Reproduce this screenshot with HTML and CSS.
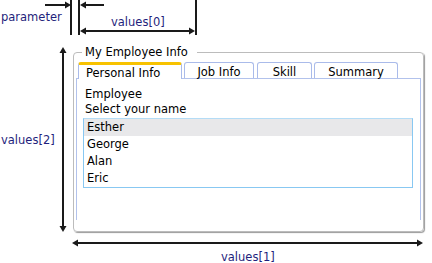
FILE: index.html
```html
<!DOCTYPE html>
<html lang="en">

<head>
    <meta charset="UTF-8">
    <title>Employee Info layout</title>
    <link rel="stylesheet" href="styles.css">
</head>

<body>
    <div class="diagram">
        <fieldset class="group">
            <legend>My Employee Info</legend>
            <div class="tabs">
                <span class="tab tab-personal active">Personal Info</span>
                <span class="tab tab-job">Job Info</span>
                <span class="tab tab-skill">Skill</span>
                <span class="tab tab-summary">Summary</span>
            </div>
            <div class="panel">
                <div class="label">Employee</div>
                <div class="label">Select your name</div>
                <ul class="list">
                    <li class="selected">Esther</li>
                    <li>George</li>
                    <li>Alan</li>
                    <li>Eric</li>
                </ul>
            </div>
        </fieldset>

        <!-- measurement marks drawn over the form -->
        <svg class="marks" width="432" height="263" viewBox="0 0 432 263">
            <g class="ink">
                <line x1="45" y1="5" x2="66" y2="5" />
                <line x1="71" y1="0" x2="71" y2="35" />
                <line x1="79" y1="0" x2="79" y2="35" />
                <line x1="86" y1="5" x2="104" y2="5" />
                <line x1="196" y1="0" x2="196" y2="35" />
                <line x1="85" y1="31" x2="190" y2="31" />
                <line x1="63" y1="52" x2="63" y2="227" />
                <line x1="77" y1="243" x2="418" y2="243" />
            </g>
            <g class="heads">
                <path d="M65 1.5 L71 5 L65 8.5 Z" />
                <path d="M86 1.5 L80 5 L86 8.5 Z" />
                <path d="M86 27.5 L80 31 L86 34.5 Z" />
                <path d="M189 27.5 L195 31 L189 34.5 Z" />
                <path d="M59.5 53 L63 47 L66.5 53 Z" />
                <path d="M59.5 226 L63 232 L66.5 226 Z" />
                <path d="M78 239.5 L72 243 L78 246.5 Z" />
                <path d="M417 239.5 L423 243 L417 246.5 Z" />
            </g>
            <text x="1" y="17">parameter</text>
            <text x="111" y="22">values[0]</text>
            <text x="1" y="140">values[2]</text>
            <text x="221" y="257">values[1]</text>
        </svg>
    </div>
</body>

</html>
```

FILE: styles.css
```css
body {
    margin: 0;
    background-color: #fff;
    font-family: 'DejaVu Sans', Verdana, sans-serif;
    font-size: 11.5px;
    color: #000;
}

.diagram {
    position: relative;
    width: 432px;
    height: 263px;
    padding: 45px 0 0 73px;
    box-sizing: border-box;
}

.group {
    width: 351px;
    box-sizing: border-box;
    margin: 0;
    padding: 0;
    border: 1px solid #bcbcbc;
    border-radius: 4px;
    box-shadow: 1px 1px 1px #9a9a9a;
}

.group legend {
    margin-left: 8px;
    padding: 0 9px 0 3px;
    line-height: 14px;
}

.tabs {
    display: flex;
    gap: 2px;
    margin: 3px 2px 0;
    padding-left: 2px;
}

.tab {
    height: 16px;
    line-height: 18px;
    box-sizing: border-box;
    border: 1px solid #aabbea;
    border-bottom: 0;
    border-radius: 3px 3px 0 0;
    background: #fff;
    text-align: center;
    margin-bottom: -1px;
    position: relative;
}

.tab.active {
    height: 17px;
    border-top: 3px solid #f7c200;
    line-height: 16px;
    text-align: left;
    padding-left: 7px;
}

.tab-personal { width: 104px; }
.tab-job { width: 70px; }
.tab-skill { width: 55px; margin-left: 1px; }
.tab-summary { width: 84px; }

.panel {
    margin: 0 2px 11px;
    height: 142px;
    box-sizing: border-box;
    border: 1px solid #b2c2ec;
    border-bottom: 0;
    padding: 8px 6px 0;
}

.label {
    padding-left: 2px;
    line-height: 15px;
}

.list {
    list-style: none;
    margin: 1px 0 0;
    padding: 0;
    width: 330px;
    box-sizing: border-box;
    border: 1px solid #88c8f2;
    border-top-color: #b4dcf6;
}

.list li {
    line-height: 17px;
    padding-left: 3px;
}

.list li.selected {
    background: #e8e8ea;
}

.marks {
    position: absolute;
    left: 0;
    top: 0;
}

.marks .ink line {
    stroke: #1a1a1a;
    stroke-width: 2;
}

.marks .heads path {
    fill: #1a1a1a;
}

.marks text {
    font-family: 'DejaVu Sans', Verdana, sans-serif;
    font-size: 11.5px;
    fill: #1f1f7c;
    dominant-baseline: central;
}
```
